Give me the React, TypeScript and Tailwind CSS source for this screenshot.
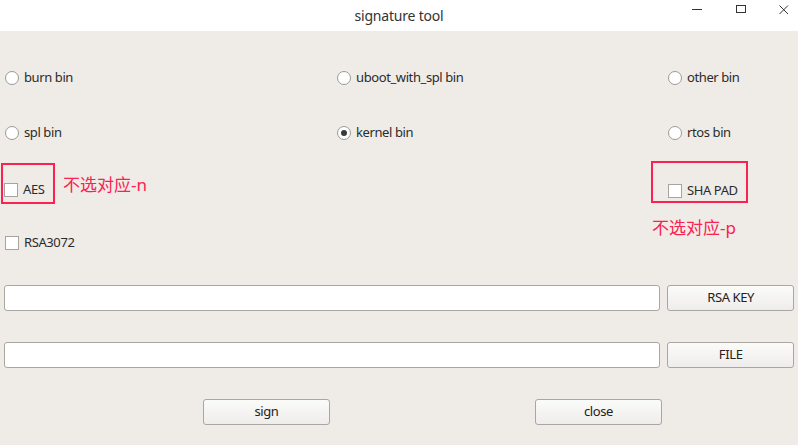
import {ReactNode} from 'react'

const font = {fontFamily: '"Noto Sans", "Noto Sans CJK SC", sans-serif'}

const Radio = ({checked}: {checked?: boolean}) => (
  <span className="flex h-[14px] w-[14px] shrink-0 items-center justify-center rounded-full border border-[#9c9a97] bg-white">
    {checked && <span className="h-[6px] w-[6px] rounded-full bg-[#3a3a3a]" />}
  </span>
)

const Check = () => (
  <span className="block h-[14px] w-[14px] shrink-0 border border-[#a6a4a1] bg-white" />
)

const RadioItem = ({label, checked}: {label: string; checked?: boolean}) => (
  <label className="flex items-center gap-[5px] text-[13px] tracking-[-0.4px] text-[#2b2b2b]">
    <Radio checked={checked} />
    <span>{label}</span>
  </label>
)

const CheckItem = ({label}: {label: string}) => (
  <label className="flex items-center gap-[5px] text-[13px] tracking-[-0.4px] text-[#2b2b2b]">
    <Check />
    <span>{label}</span>
  </label>
)

const Button = ({children, className}: {children: ReactNode; className?: string}) => (
  <button
    className={`flex h-[26px] items-center justify-center rounded-[3px] border border-[#aaa7a3] bg-gradient-to-b from-[#fbfbfa] to-[#efedeb] text-[13px] tracking-[-0.4px] text-[#222] ${className ?? ''}`}
  >
    {children}
  </button>
)

const Input = () => (
  <input className="h-[26px] w-[658px] rounded-[3px] border border-[#aaa7a3] bg-white px-1 text-[13px] outline-none" />
)

const TitleBar = () => (
  <div className="grid h-[31px] grid-cols-[1fr_auto_1fr] items-center bg-white">
    <div />
    <div className="text-[14px] tracking-[-0.2px] text-[#333]">signature tool</div>
    <div className="flex h-full items-start justify-end">
      <div className="flex w-[30px] justify-center pt-[3px]">
        <svg width="12" height="12" viewBox="0 0 12 12">
          <line x1="1" y1="6.5" x2="11" y2="6.5" stroke="#333" strokeWidth="1" />
        </svg>
      </div>
      <div className="flex w-[58px] justify-center pt-[3px]">
        <svg width="12" height="12" viewBox="0 0 12 12">
          <rect x="1.5" y="2.5" width="9" height="7" fill="none" stroke="#333" strokeWidth="1" />
        </svg>
      </div>
      <div className="flex w-[28px] justify-center pt-[4px]">
        <svg width="12" height="12" viewBox="0 0 12 12">
          <path d="M1.5 1.5 L10 10 M10 1.5 L1.5 10" stroke="#333" strokeWidth="1" />
        </svg>
      </div>
    </div>
  </div>
)

const App = () => {
  return (
    <div className="h-[445px] w-[798px] overflow-hidden bg-[#efebe7]" style={font}>
      <TitleBar />
      <div className="grid grid-cols-[332px_319px_1fr] grid-rows-[55px_55px_55px_55px] pt-[19px]">
        <div className="flex items-center pl-[5px]">
          <RadioItem label="burn bin" />
        </div>
        <div className="flex items-center pl-[5px]">
          <RadioItem label="uboot_with_spl bin" />
        </div>
        <div className="flex items-center pl-[17px]">
          <RadioItem label="other bin" />
        </div>

        <div className="flex items-center pl-[5px]">
          <RadioItem label="spl bin" />
        </div>
        <div className="flex items-center pl-[5px]">
          <RadioItem checked label="kernel bin" />
        </div>
        <div className="flex items-center pl-[17px]">
          <RadioItem label="rtos bin" />
        </div>

        <div className="flex items-start pl-[1px] pt-[3px]">
          <div className="h-[41px] w-[54px] border-2 border-[#fb2150] pl-[1px] pt-[15px]">
            <CheckItem label="AES" />
          </div>
          <span className="ml-[8px] pt-[10px] text-[17px] leading-[24px] text-[#fb2150]">不选对应-n</span>
        </div>
        <div />
        <div className="flex flex-col items-start pt-[1px]">
          <div className="h-[47px] w-[97px] border-2 border-[#fb2150] pl-[15px] pt-[18px]">
            <CheckItem label="SHA PAD" />
          </div>
          <span className="mt-[13px] pl-[1px] text-[17px] leading-[24px] text-[#fb2150]">不选对应-p</span>
        </div>

        <div className="flex items-center pl-[5px]">
          <CheckItem label="RSA3072" />
        </div>
        <div />
        <div />
      </div>

      <div className="mt-[15px] flex flex-col gap-[31px] px-[4px]">
        <div className="flex items-center gap-[7px]">
          <Input />
          <Button className="w-[127px]">RSA KEY</Button>
        </div>
        <div className="flex items-center gap-[7px]">
          <Input />
          <Button className="w-[127px]">FILE</Button>
        </div>
        <div className="flex items-center pl-[199px]">
          <Button className="w-[127px]">sign</Button>
          <Button className="ml-[205px] w-[127px]">close</Button>
        </div>
      </div>
    </div>
  )
}

export default App
